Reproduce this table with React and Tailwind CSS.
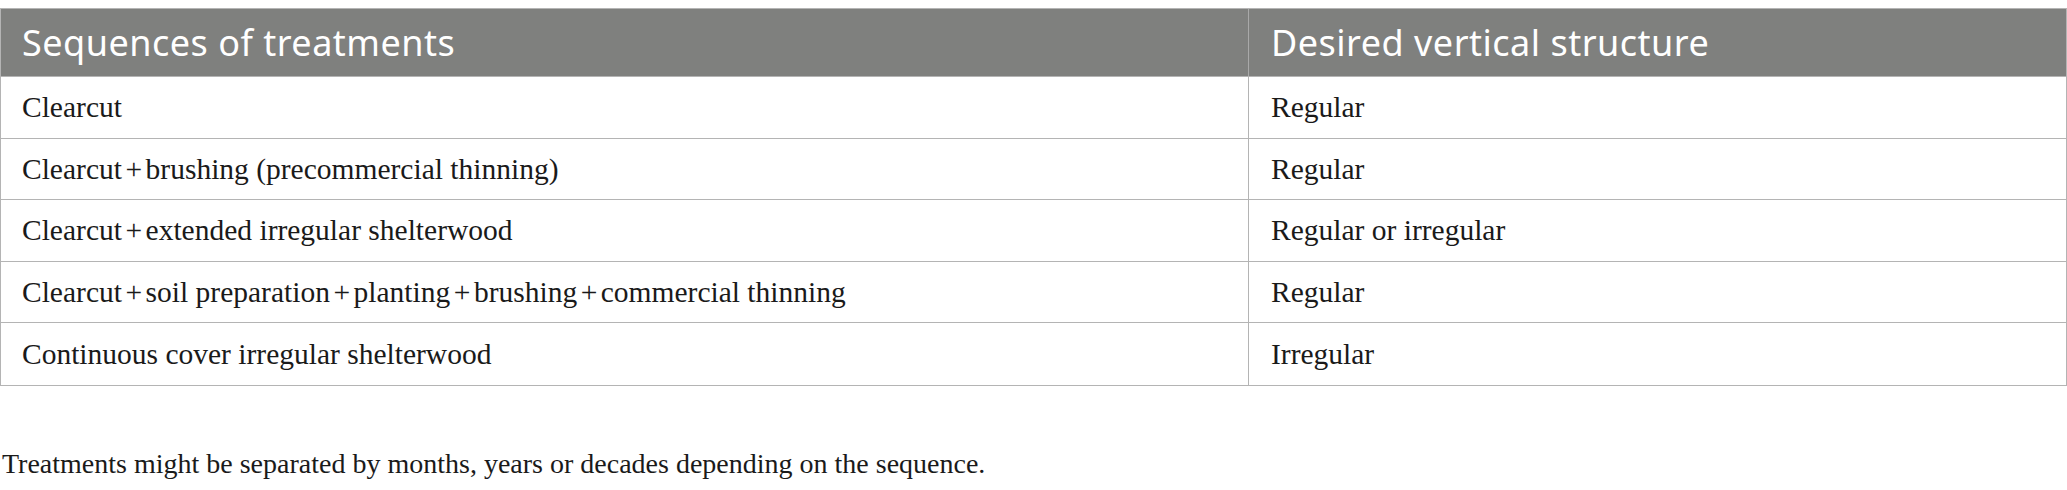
function Cell({ text, first }) {
  const parts = text.split(" + ");
  return (
    <div
      className={
        "flex items-center text-[29.5px] text-[#1a1a1a] font-['Liberation_Serif',serif] whitespace-pre " +
        (first ? "pl-[21px] border-r border-[#b4b4b4]" : "pl-[22px]")
      }
    >
      {parts.map((p, i) => (
        <span key={i} className="flex items-center">
          {i > 0 && <span className="mx-[3.5px]">+</span>}
          {p}
        </span>
      ))}
    </div>
  );
}

export default function App() {
  const rows = [
    ["Clearcut", "Regular"],
    ["Clearcut + brushing (precommercial thinning)", "Regular"],
    ["Clearcut + extended irregular shelterwood", "Regular or irregular"],
    ["Clearcut + soil preparation + planting + brushing + commercial thinning", "Regular"],
    ["Continuous cover irregular shelterwood", "Irregular"],
  ];
  return (
    <div className="w-[2067px] h-[490px] bg-white pt-[8px]">
      <div className="w-[2067px] border border-[#b4b4b4]">
        <div className="grid grid-cols-[1248px_1fr] bg-[#7f807e] h-[68px] border-b border-[#b4b4b4] text-white text-[36px] tracking-[0.5px] font-['Noto_Sans',sans-serif]">
          <div className="flex items-center pl-[21px] border-r border-[#a9a9a9]">
            Sequences of treatments
          </div>
          <div className="flex items-center pl-[22px]">Desired vertical structure</div>
        </div>
        {rows.map((r, i) => (
          <div
            key={i}
            className={
              "grid grid-cols-[1248px_1fr] h-[61.5px] " +
              (i < rows.length - 1 ? "border-b border-[#b4b4b4]" : "")
            }
          >
            <Cell text={r[0]} first />
            <Cell text={r[1]} />
          </div>
        ))}
      </div>
      <div className="mt-[64px] pl-[2px] text-[28px] leading-none text-[#1a1a1a] font-['Liberation_Serif',serif]">
        Treatments might be separated by months, years or decades depending on the sequence.
      </div>
    </div>
  );
}
